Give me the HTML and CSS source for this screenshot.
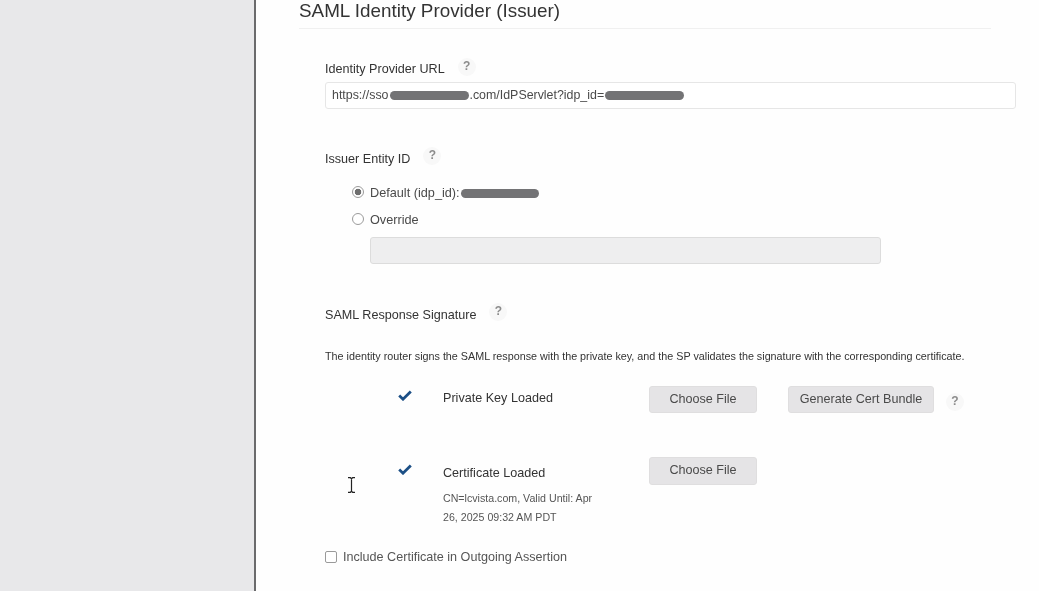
FILE: index.html
```html
<!DOCTYPE html>
<html lang="en">
<head>
<meta charset="utf-8">
<title>SAML Identity Provider (Issuer)</title>
<link rel="stylesheet" href="styles.css">
</head>
<body>
<div class="page">
  <aside class="sidebar"></aside>
  <main class="main">
    <h2 class="title">SAML Identity Provider (Issuer)</h2>
    <section class="form">
      <div class="label-row url-label">
        <span class="label">Identity Provider URL</span>
        <span class="help">?</span>
      </div>
      <div class="input url-input">https://sso<span class="blob blob-a"></span>.com/IdPServlet?idp_id=<span class="blob blob-b"></span></div>

      <div class="label-row issuer-label">
        <span class="label">Issuer Entity ID</span>
        <span class="help">?</span>
      </div>
      <div class="radios">
        <div class="radio-row"><span class="radio checked"></span><span class="radio-text">Default (idp_id): <span class="blob blob-c"></span></span></div>
        <div class="radio-row override"><span class="radio"></span><span class="radio-text">Override</span></div>
        <div class="input disabled"></div>
      </div>

      <div class="label-row sig-label">
        <span class="label">SAML Response Signature</span>
        <span class="help">?</span>
      </div>
      <p class="desc">The identity router signs the SAML response with the private key, and the SP validates the signature with the corresponding certificate.</p>

      <div class="key-row">
        <svg class="check" viewBox="0 0 14 11" width="14" height="11"><path d="M1.2 5.6 5 9.2 12.8 1.6" fill="none" stroke="#1c4f86" stroke-width="2.8"/></svg>
        <div class="key-text">Private Key Loaded</div>
        <button class="btn choose" type="button">Choose File</button>
        <button class="btn generate" type="button">Generate Cert Bundle</button>
        <span class="help help-gen">?</span>
      </div>

      <div class="key-row cert-row">
        <svg class="check" viewBox="0 0 14 11" width="14" height="11"><path d="M1.2 5.6 5 9.2 12.8 1.6" fill="none" stroke="#1c4f86" stroke-width="2.8"/></svg>
        <div class="key-text">Certificate Loaded
          <div class="cert-meta">CN=lcvista.com, Valid Until: Apr<br>26, 2025 09:32 AM PDT</div>
        </div>
        <button class="btn choose" type="button">Choose File</button>
      </div>

      <div class="include"><span class="checkbox"></span><span>Include Certificate in Outgoing Assertion</span></div>

      <svg class="cursor" viewBox="0 0 9 16" width="9" height="16"><path d="M1 .7H3.4L4.5 1.7 5.6 .7H8M4.5 1.7V14.3M1 15.3H3.4L4.5 14.3 5.6 15.3H8" fill="none" stroke="#222" stroke-width="1.2"/></svg>
    </section>
  </main>
</div>
</body>
</html>
```
FILE: styles.css
```css
* { box-sizing: border-box; }
html, body { margin: 0; height: 100%; overflow: hidden; }
body {
  font-family: "Liberation Sans", Arial, sans-serif;
  background: #fefefe;
  color: #3b3b3b;
  font-size: 12.6px;
}
.page { display: flex; height: 591px; }
.sidebar {
  width: 256px;
  flex: none;
  background: #e8e8ea;
  border-right: 2px solid #6a6a6c;
}
.main { flex: 1; padding-left: 43px; min-width: 0; filter: blur(0.3px); }
.title {
  margin: 0;
  width: 692px;
  height: 29px;
  border-bottom: 1px solid #f0f0f0;
  font-size: 18.85px;
  line-height: 22px;
  font-weight: 400;
  color: #333;
}
.form { position: relative; padding-left: 26px; width: 717px; }
.label-row { display: flex; align-items: center; height: 24px; }
.label { font-size: 12.6px; line-height: 16px; color: #333; }
.help {
  width: 18px; height: 18px; border-radius: 50%;
  background: #f8f8f8;
  color: #8c8c8c;
  font-size: 12px;
  font-weight: 700;
  line-height: 17px;
  text-align: center;
  margin-left: 13px;
  margin-top: -7px;
}
.url-label { margin-top: 28px; }
.url-label .help { margin-top: -5px; }
.input {
  border: 1px solid #e6e6e6;
  border-radius: 3px;
  background: #fff;
}
.url-input {
  width: 691px;
  height: 27px;
  margin-top: 1px;
  padding-left: 6px;
  line-height: 25px;
  font-size: 12.4px;
  color: #4a4a4a;
}
.blob {
  display: inline-block;
  height: 9px;
  border-radius: 4.5px;
  background: #737375;
  vertical-align: -1px;
}
.blob-a { width: 79px; margin-left: 2px; }
.blob-b { width: 79px; margin-left: 1px; }
.blob-c { width: 78px; margin-left: -2px; }
.issuer-label { margin-top: 38px; }
.radios { padding-left: 27px; margin-top: 12px; font-size: 12.7px; color: #4a4a4a; }
.radio-row { display: flex; align-items: center; gap: 6px; height: 18px; }
.radio-text { padding-top: 2px; }
.override { margin-top: 9px; }
.radio {
  width: 12px; height: 12px; border-radius: 50%;
  border: 1px solid #9a9a9a;
  background: #fff;
  flex: none;
}
.radio.checked { background: radial-gradient(circle, #6e6e6e 0 3px, #fff 3.6px); }
.disabled {
  width: 511px;
  height: 27px;
  margin: 9px 0 0 18px;
  background: #eeeeef;
  border-color: #dcdcdc;
}
.sig-label { margin-top: 39px; }
.desc { margin: 22px 0 0; font-size: 10.77px; line-height: 14px; color: #333; white-space: nowrap; }
.key-row { display: flex; margin-top: 23px; height: 28px; position: relative; }
.check { flex: none; margin: 4px 0 0 73px; }
.key-text { width: 206px; margin-left: 31px; padding-top: 4px; font-size: 12.6px; line-height: 16px; color: #333; flex: none; }
.btn {
  height: 27px;
  border: 1px solid #dfdedf;
  border-radius: 3px;
  background: #e5e4e6;
  color: #4a4a4a;
  font: 12.6px "Liberation Sans", Arial, sans-serif;
  padding: 0 0 2px;
  flex: none;
}
.choose { width: 108px; }
.generate { width: 146px; margin-left: 31px; }
.help-gen { margin: 7px 0 0 12px; }
.cert-row { margin-top: 43px; height: 66px; }
.cert-row .check { margin-top: 7px; }
.cert-row .key-text { padding-top: 8px; }
.cert-row .btn { height: 28px; }
.cert-meta { font-size: 10.65px; line-height: 19px; color: #555; margin-top: 8px; }
.include { display: flex; align-items: center; gap: 6px; height: 18px; margin-top: 25px; font-size: 12.6px; color: #555; }
.checkbox { width: 12px; height: 12px; border: 1px solid #9a9a9a; border-radius: 2px; background: #fff; flex: none; }
.cursor { position: absolute; left: 48px; top: 420px; }
```
